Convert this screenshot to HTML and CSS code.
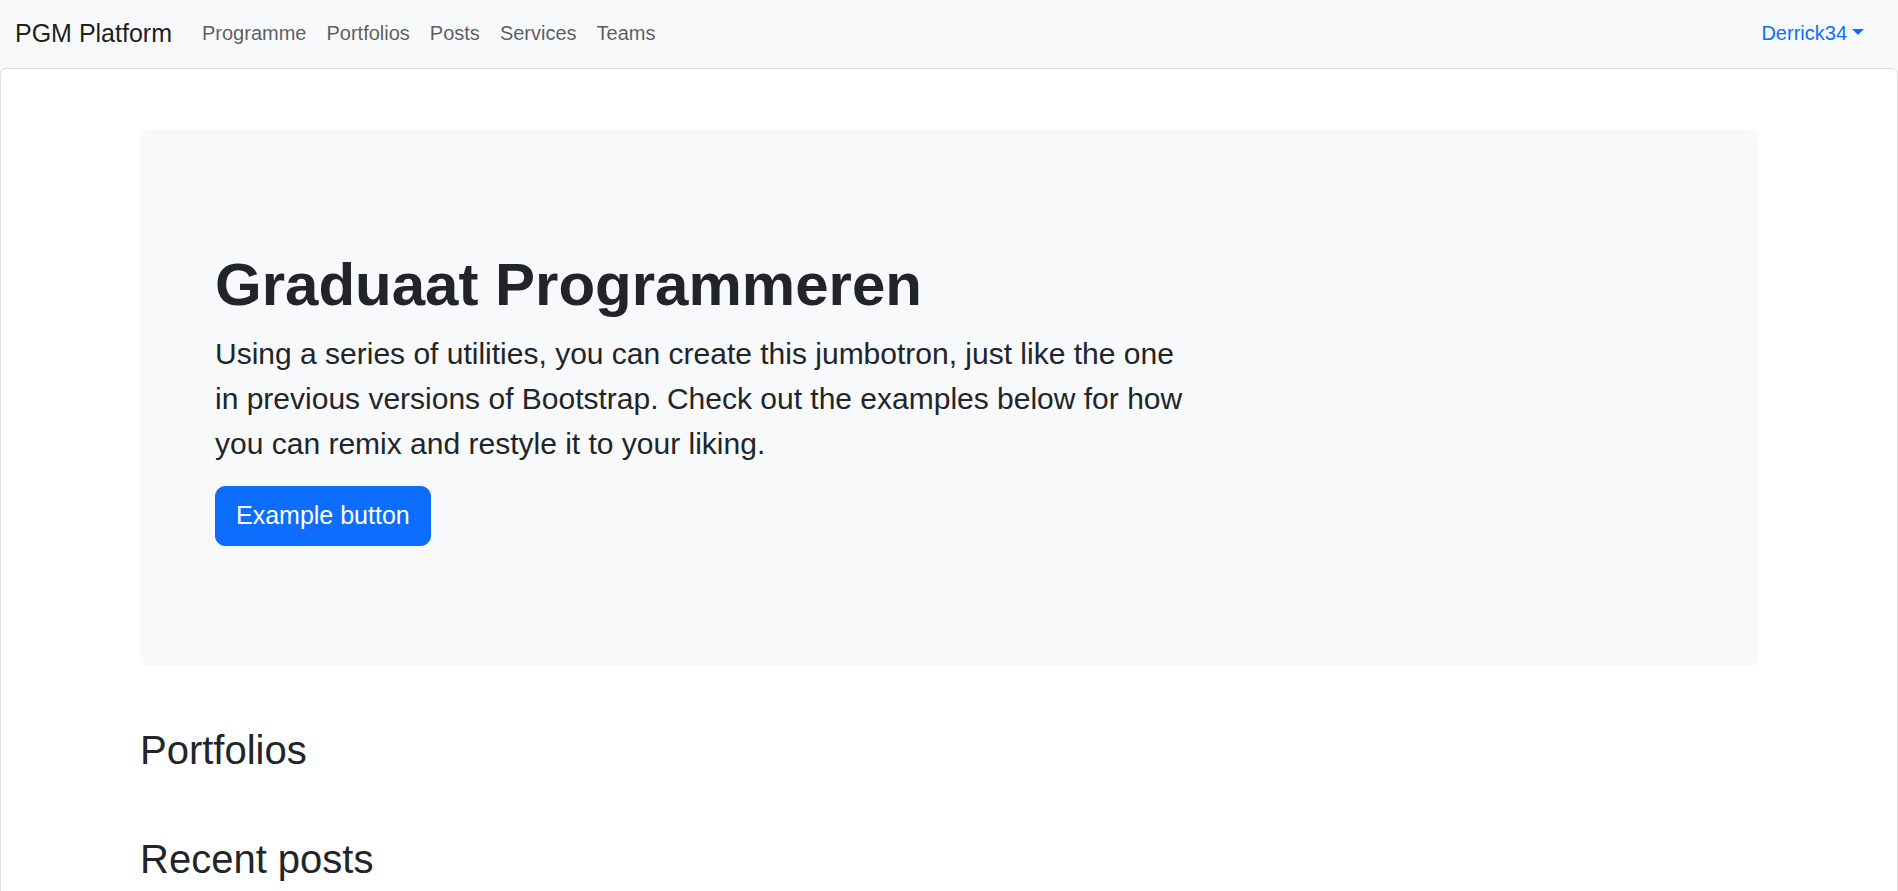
FILE: index.html
```html
<!DOCTYPE html>
<html lang="en">
<head>
<meta charset="utf-8">
<title>PGM Platform</title>
<link rel="stylesheet" href="styles.css">
</head>
<body>
<nav class="navbar">
  <a class="brand" href="#">PGM Platform</a>
  <ul class="nav-links">
    <li><a href="#">Programme</a></li>
    <li><a href="#">Portfolios</a></li>
    <li><a href="#">Posts</a></li>
    <li><a href="#">Services</a></li>
    <li><a href="#">Teams</a></li>
  </ul>
  <a class="user-toggle" href="#">Derrick34</a>
</nav>
<main class="page-card">
  <div class="container">
    <section class="jumbotron">
      <div class="jumbo-inner">
        <h1 class="jumbo-title">Graduaat Programmeren</h1>
        <p class="jumbo-lead">Using a series of utilities, you can create this jumbotron, just like the one in previous versions of Bootstrap. Check out the examples below for how you can remix and restyle it to your liking.</p>
        <button class="btn-primary" type="button">Example button</button>
      </div>
    </section>
    <section class="section">
      <h2 class="section-title">Portfolios</h2>
    </section>
    <section class="section">
      <h2 class="section-title">Recent posts</h2>
    </section>
  </div>
</main>
</body>
</html>
```
FILE: styles.css
```css
* { box-sizing: border-box; }

html, body {
  margin: 0;
  padding: 0;
}

body {
  font-family: "Liberation Sans", Arial, sans-serif;
  font-size: 20px;
  line-height: 1.5;
  color: #212529;
  background: #f8f9fa;
  overflow: hidden;
  height: 891px;
}

a { text-decoration: none; }

.navbar {
  display: flex;
  align-items: center;
  height: 68px;
  padding: 0 34px 0 15px;
  background: #f8f9fa;
}

.brand {
  font-size: 25px;
  line-height: 37.5px;
  color: rgba(0, 0, 0, 0.9);
  margin-right: 20px;
}

.nav-links {
  display: flex;
  list-style: none;
  margin: 0;
  padding: 0;
  flex: 1;
}

.nav-links a {
  display: block;
  padding: 9px 10px 11px;
  color: rgba(0, 0, 0, 0.65);
  font-size: 20px;
  line-height: 30px;
}

.user-toggle {
  color: #0d6efd;
  font-size: 20px;
  line-height: 30px;
  padding: 9px 0 11px;
}

.user-toggle::after {
  content: "";
  display: inline-block;
  margin-left: 5px;
  vertical-align: 5px;
  border-top: 6px solid;
  border-right: 6px solid transparent;
  border-left: 6px solid transparent;
  border-bottom: 0;
}

.page-card {
  background: #fff;
  border: 1px solid #dcdee0;
  border-radius: 6px;
  min-height: 900px;
}

.container {
  max-width: 1650px;
  margin: 0 auto;
  padding: 60px 15px 0 16px;
}

.jumbotron {
  background: #f8f9fa;
  border-radius: 10px;
  padding: 60px;
  margin-bottom: 60px;
}

.jumbo-inner {
  padding: 60px 15px;
}

.jumbo-title {
  margin: 0 0 10px;
  font-size: 60px;
  line-height: 1.2;
  font-weight: 700;
}

.jumbo-lead {
  width: 66.6667%;
  margin: 0 0 20px;
  font-size: 30px;
  line-height: 45px;
  font-weight: 300;
}

.btn-primary {
  display: inline-block;
  font-family: inherit;
  font-size: 25px;
  line-height: 37.5px;
  padding: 10px 20px;
  color: #fff;
  background: #0d6efd;
  border: 1.25px solid #0d6efd;
  border-radius: 10px;
  cursor: pointer;
}

.section {
  margin-bottom: 61px;
}

.section-title {
  margin: 0 0 10px;
  font-size: 40px;
  line-height: 48px;
  font-weight: 500;
}
```
